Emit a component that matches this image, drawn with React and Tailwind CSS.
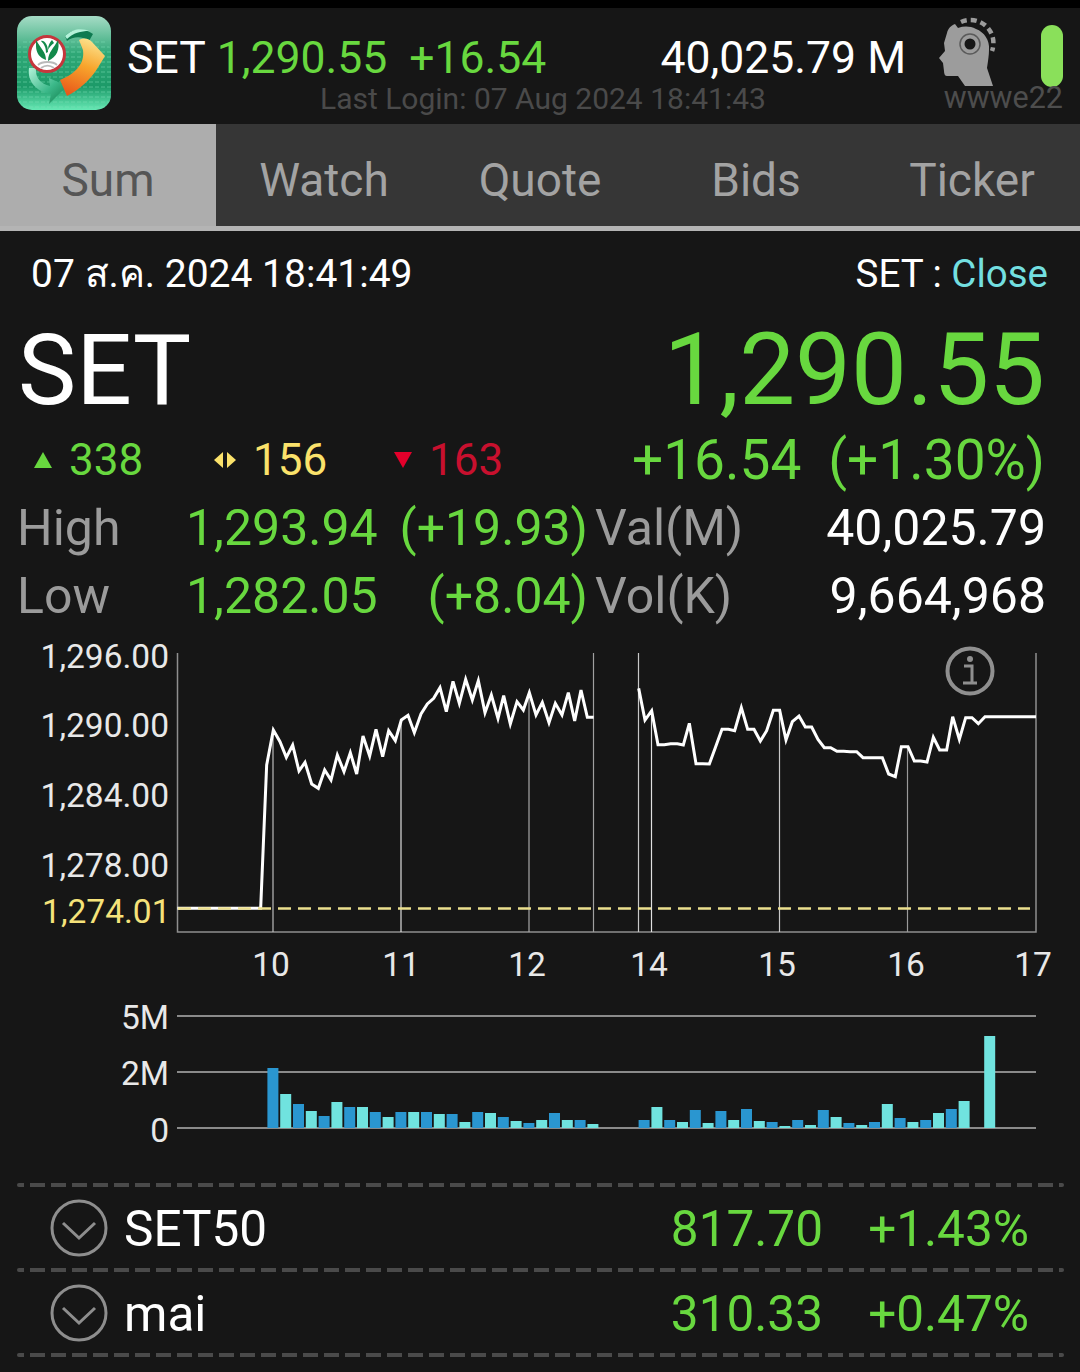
const GREEN = "#68d83f";

const tabs = ["Sum", "Watch", "Quote", "Bids", "Ticker"];

// intraday index line, morning and afternoon sessions, in thirds of a pixel
const morning = [[22,805],[272,805],[290,375],[310,270],[330,305],[349,352],[368,315],[387,393],[405,367],[425,432],[445,445],[464,390],[483,420],[502,345],[522,395],[541,338],[560,402],[579,288],[599,348],[618,268],[638,350],[656,272],[676,302],[694,240],[714,226],[733,278],[753,222],[772,192],[791,175],[810,143],[829,215],[849,124],[868,190],[887,118],[907,180],[925,122],[945,218],[964,165],[984,235],[1001,167],[1021,252],[1041,185],[1060,210],[1078,158],[1098,225],[1117,187],[1137,248],[1156,190],[1176,225],[1195,158],[1214,243],[1233,150],[1252,232],[1271,232]];
const afternoon = [[116,145],[135,240],[155,212],[174,314],[193,314],[212,311],[232,311],[250,315],[268,250],[288,371],[308,371],[328,372],[347,320],[366,268],[385,268],[404,272],[424,203],[443,268],[462,268],[481,303],[500,272],[520,211],[539,211],[558,300],[577,245],[597,228],[616,261],[635,261],[654,298],[673,323],[692,323],[711,334],[731,334],[750,335],[770,335],[789,353],[808,353],[827,353],[847,353],[866,402],[886,410],[904,320],[924,320],[943,363],[962,363],[981,366],[1000,292],[1019,330],[1040,330],[1058,230],[1078,298],[1097,233],[1116,233],[1135,251],[1155,230],[1308,230]];

const toPoints = (pts, originX) => pts.map(([x, y]) => `${originX + x / 3},${640 + y / 3}`).join(" ");

const volumes = [60,34,24,17,12,26,21,21,16,11,16,16,16,14,14,6,16,15,11,7,5,8,15,8,8,4,null,null,null,8,21,8,6,18,5,17,8,19,7,6,2,8,3,18,11,5,3,6,24,10,6,8,15,19,27,null,92];

const priceLabels = [["1,296.00", 668], ["1,290.00", 737], ["1,284.00", 807], ["1,278.00", 877]];

// hour markers rise from the axis to the index line; the session breaks run full height
const hourLines = [
  [273, 730, "#bdbdbd"], [401, 720, "#e0e0e0"], [529, 693, "#a8a8a8"], [593.5, 653, "#a0a0a0"],
  [638.5, 653, "#c8c8c8"], [651.5, 711, "#e0e0e0"], [779.5, 710, "#c8c8c8"], [907.5, 747, "#9a9a9a"],
];
const hours = [["10", 271], ["11", 401], ["12", 527], ["14", 649], ["15", 777], ["16", 906], ["17", 1033]];

const Logo = () => (
  <svg viewBox="0 0 94 94" className="w-[94px] h-[94px] mt-2 shrink-0">
    <defs>
      <linearGradient id="tile" x1="0" y1="0" x2="0" y2="1">
        <stop offset="0" stopColor="#a6dcc6" />
        <stop offset="0.4" stopColor="#2fa877" />
        <stop offset="0.75" stopColor="#1c9a68" />
        <stop offset="1" stopColor="#66e8b4" />
      </linearGradient>
      <linearGradient id="arrow" x1="0.6" y1="0" x2="0.3" y2="1">
        <stop offset="0" stopColor="#fbe08a" />
        <stop offset="0.45" stopColor="#f8a52c" />
        <stop offset="1" stopColor="#e8591a" />
      </linearGradient>
      <linearGradient id="swirl" x1="0" y1="0" x2="1" y2="1">
        <stop offset="0" stopColor="#b4f2da" />
        <stop offset="0.55" stopColor="#3cb98a" />
        <stop offset="1" stopColor="#0e7a48" />
      </linearGradient>
      <pattern id="digits" width="6" height="5" patternUnits="userSpaceOnUse">
        <rect width="4" height="2" fill="#7fe0b8" opacity="0.25" />
      </pattern>
    </defs>
    <rect width="94" height="94" rx="15" fill="url(#tile)" />
    <rect y="22" width="94" height="72" rx="15" fill="url(#digits)" />
    <path d="M48 20 C56 12 68 12 76 18 L72 25 C66 20 56 20 50 25 Z" fill="#0e7a50" />
    <path d="M48 20 C56 12 66 12 72 15 C64 15 56 17 50 23 Z" fill="#b4f2da" />
    <path d="M12 52 C10 66 20 76 34 78 L32 88 L50 70 L32 62 L33 70 C24 68 18 62 19 52 Z" fill="url(#swirl)" />
    <path d="M43 64 C58 58 68 48 66 34 L62 24 C68 21 72 23 75 26 L88 40 L80 53 C74 63 62 74 50 80 Z" fill="url(#arrow)" />
    <circle cx="30" cy="38" r="17.500" fill="#fff" stroke="#c5363c" strokeWidth="3" />
    <path d="M29 44 C29 36 24 33 19 24 L19 30 C19 37 23 42 29 44 Z M29 37 C29 31 27 28 24 25 C27 24 31 28 31 36 Z" fill="#12894a" />
    <path d="M31 45 C31 36 37 32 41 24 C43 33 40 41 31 45 Z M31 34 C31 29 33 26 35 24 L37 27 C34 29 32 32 31 34 Z" fill="#12894a" />
    <path d="M21 49 C25 45 36 45 40 49 M24 52 C28 49 33 49 37 52" fill="none" stroke="#b9b9b9" strokeWidth="1.800" />
  </svg>
);

const HeadIcon = () => (
  <svg viewBox="938 18 60 68" className="w-[60px] h-[68px] shrink-0 overflow-visible">
    <path d="M955 23 C950 25 948 28 947 32 L944 42 L945 50 L939 57 L943 62 L944 70 C944 73 945 75 947 75 L958 75 L965 85 L993 85 L987 67 C988 60 989 54 989 49 C990 39 984 31 976 28 C970 25 964 25 958 27 Z" fill="#9c9c9c" />
    <circle cx="970" cy="43" r="10" fill="none" stroke="#5a5a5a" strokeWidth="1.500" />
    <circle cx="970" cy="43" r="5.500" fill="#161616" />
    <path d="M961 21 A23 23 0 0 1 992 50" fill="none" stroke="#9c9c9c" strokeWidth="4.500" strokeDasharray="6 4" />
  </svg>
);

const Chevron = () => (
  <svg viewBox="0 0 58 58" className="w-[58px] h-[58px] shrink-0">
    <circle cx="29" cy="29" r="27" fill="none" stroke="#8e8e8e" strokeWidth="3" />
    <path d="M13 24 L29 39 L45 24" fill="none" stroke="#8e8e8e" strokeWidth="3" />
  </svg>
);

const Dashes = () => (
  <div className="ml-[17px] mr-[16px] h-1 rounded-full bg-[repeating-linear-gradient(90deg,#4a4a4a_-8px,#4a4a4a_7px,transparent_7px,transparent_13px)]" />
);

const StatRow = ({ label, value, change, metric, amount }) => (
  <div className="flex items-center h-[68px] text-[50px] leading-none">
    <span className="w-[186px] pl-[17px] text-[#9b9b9b]">{label}</span>
    <span className="w-[190px] text-[#68d83f]">{value}</span>
    <span className="w-[212px] text-right text-[#68d83f]">{change}</span>
    <span className="ml-[7px] text-[#9b9b9b]">{metric}</span>
    <span className="ml-auto pr-[34px] text-white">{amount}</span>
  </div>
);

const IndexRow = ({ name, value, change }) => (
  <div className="flex items-center h-[81px] pl-[50px] pr-[51px] text-[49.500px] leading-none">
    <Chevron />
    <span className="ml-[16px] mt-[5px] text-white">{name}</span>
    <span className="ml-auto mt-[5px] text-[#68d83f]">{value}</span>
    <span className="w-[206px] mt-[5px] text-right text-[#68d83f]">{change}</span>
  </div>
);

const IntradayChart = () => (
  <svg viewBox="0 630 1080 553" className="block w-[1080px] h-[553px]" fontFamily="Roboto, sans-serif">
    <path d="M177.500 653 V932 H1036 V653" fill="none" stroke="#8f8f8f" strokeWidth="1.500" />
    {hourLines.map(([x, top, color]) => (
      <line key={x} x1={x} x2={x} y1={top} y2="932" stroke={color} strokeWidth="1.200" />
    ))}
    <polyline points={toPoints(morning, 170)} fill="none" stroke="#fff" strokeWidth="3" strokeLinejoin="miter" />
    <polyline points={toPoints(afternoon, 600)} fill="none" stroke="#fff" strokeWidth="3" strokeLinejoin="miter" />
    <line x1="178" x2="1030" y1="908.500" y2="908.500" stroke="#ece08e" strokeWidth="2.500" strokeDasharray="13 7" />

    <circle cx="970" cy="671" r="22.500" fill="none" stroke="#8f8f8f" strokeWidth="4" />
    <circle cx="970" cy="659" r="3" fill="#8f8f8f" />
    <path d="M964 666 H972 V682 M963 683 H977" fill="none" stroke="#8f8f8f" strokeWidth="3" />

    {priceLabels.map(([text, y]) => (
      <text key={text} x="169" y={y} textAnchor="end" fontSize="33.500" fill="#e8e8e8">{text}</text>
    ))}
    <text x="170.500" y="923" textAnchor="end" fontSize="33.500" fill="#f5e27a">1,274.01</text>
    {hours.map(([text, x]) => (
      <text key={text} x={x} y="976" textAnchor="middle" fontSize="33.500" fill="#e8e8e8">{text}</text>
    ))}

    {[1016, 1072, 1128].map((y) => (
      <line key={y} x1="177" x2="1036" y1={y} y2={y} stroke="#8a8a8a" strokeWidth="2" />
    ))}
    <text x="169" y="1029" textAnchor="end" fontSize="33.500" fill="#e8e8e8">5M</text>
    <text x="169" y="1085" textAnchor="end" fontSize="33.500" fill="#e8e8e8">2M</text>
    <text x="169" y="1142" textAnchor="end" fontSize="33.500" fill="#e8e8e8">0</text>
    {volumes.map((h, i) => {
      if (h === null) return null;
      // colours restart after the lunch break
      const blue = i < 26 ? i % 2 === 0 : i % 2 === 1;
      return <rect key={i} x={267.400 + i * 12.800} y={1128 - h} width="11" height={h} fill={blue ? "#2a96d0" : "#70e3df"} />;
    })}
  </svg>
);

export default function App() {
  return (
    <div className="w-[1080px] h-[1372px] overflow-hidden bg-[#161616] font-['Roboto','Noto_Sans',sans-serif]">
      <div className="h-2 bg-black" />

      {/* ticker header */}
      <div className="flex h-[116px] pl-[17px]">
        <Logo />
        <div className="ml-[16px] w-[779px] pt-[28px]">
          <div className="flex text-[44.500px] leading-none">
            <span className="text-white">SET</span>
            <span className="ml-[11px] text-[#68d83f]">1,290.55</span>
            <span className="ml-[22px] text-[#68d83f]">+16.54</span>
            <span className="ml-auto text-white">40,025.79 M</span>
          </div>
          <div className="ml-[193px] mt-[3px] text-[30px] leading-none text-[#4a4a4a]">Last Login: 07 Aug 2024 18:41:43</div>
        </div>
        <div className="ml-[32px] w-[125px] pt-[11px]">
          <div className="flex justify-between h-[64px]">
            <HeadIcon />
            <div className="mt-[6px] w-[22px] h-[62px] rounded-full bg-[#8ae05a]" />
          </div>
          <div className="text-right text-[30.500px] leading-none text-[#4d4d4d]">wwwe22</div>
        </div>
      </div>

      {/* section tabs */}
      <div className="grid grid-cols-5 h-[107px] border-b-[5px] border-[#b4b4b4] bg-[#363636] text-[46px] leading-none">
        {tabs.map((tab, i) => (
          <div key={tab} className={`flex items-center justify-center pt-[10px] ${i === 0 ? "bg-[#adadad] text-[#555555]" : "text-[#a3a3a3]"}`}>
            {tab}
          </div>
        ))}
      </div>

      <div className="flex items-center justify-between h-[84px] pt-[2px] pl-[31px] pr-[32px] leading-none">
        <span className="text-[39px] text-white">07 ส.ค. 2024 18:41:49</span>
        <span className="text-[38.500px] text-white">SET : <span className="text-[#73dfe0]">Close</span></span>
      </div>

      <div className="flex items-center justify-between h-[111px] pl-[18px] pr-[35px] pt-[1px] leading-none">
        <span className="text-[98px] text-white">SET</span>
        <span className="text-[99.500px] text-[#68d83f]">1,290.55</span>
      </div>

      {/* advancers, unchanged, decliners and the day's change */}
      <div className="flex items-center h-[68px] pr-[35px] leading-none">
        <svg viewBox="0 0 18 16" className="ml-[34px] w-[18px] h-[16px]"><path d="M9 0 L18 16 H0 Z" fill={GREEN} /></svg>
        <span className="ml-[17px] w-[145px] text-[44px] text-[#68d83f]">338</span>
        <svg viewBox="0 0 22 16" className="w-[22px] h-[16px]"><path d="M9 0 V16 L0 8 Z M13 0 V16 L22 8 Z" fill="#fbe26b" /></svg>
        <span className="ml-[17px] w-[141px] text-[44px] text-[#fbe26b]">156</span>
        <svg viewBox="0 0 18 16" className="w-[18px] h-[16px]"><path d="M0 0 H18 L9 16 Z" fill="#e4002b" /></svg>
        <span className="ml-[17px] text-[44px] text-[#c8102e]">163</span>
        <span className="ml-auto text-[55px] text-[#68d83f]">+16.54</span>
        <span className="ml-[27px] text-[55px] text-[#68d83f]">(+1.30%)</span>
      </div>

      <StatRow label="High" value="1,293.94" change="(+19.93)" metric="Val(M)" amount="40,025.79" />
      <StatRow label="Low" value="1,282.05" change="(+8.04)" metric="Vol(K)" amount="9,664,968" />

      <IntradayChart />

      <Dashes />
      <IndexRow name="SET50" value="817.70" change="+1.43%" />
      <Dashes />
      <IndexRow name="mai" value="310.33" change="+0.47%" />
      <Dashes />
    </div>
  );
}
